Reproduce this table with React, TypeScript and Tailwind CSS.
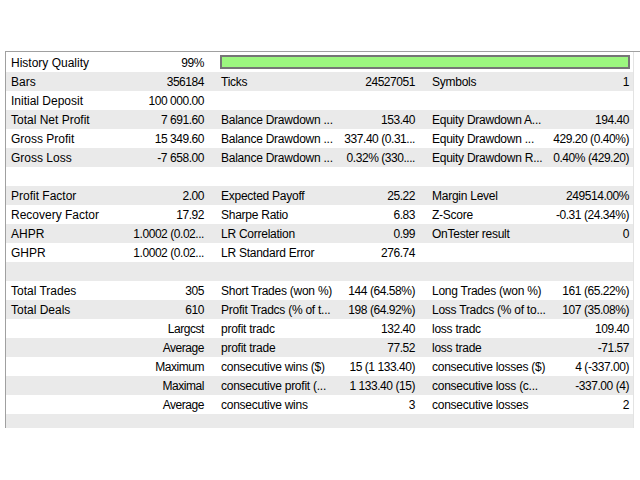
type Row = [string, string, string?, string?, string?, string?];

const rows: Row[] = [
  ["History Quality", "99%"],
  ["Bars", "356184", "Ticks", "24527051", "Symbols", "1"],
  ["Initial Deposit", "100 000.00"],
  ["Total Net Profit", "7 691.60", "Balance Drawdown ...", "153.40", "Equity Drawdown A...", "194.40"],
  ["Gross Profit", "15 349.60", "Balance Drawdown ...", "337.40 (0.31...", "Equity Drawdown ...", "429.20 (0.40%)"],
  ["Gross Loss", "-7 658.00", "Balance Drawdown ...", "0.32% (330....", "Equity Drawdown R...", "0.40% (429.20)"],
  ["", ""],
  ["Profit Factor", "2.00", "Expected Payoff", "25.22", "Margin Level", "249514.00%"],
  ["Recovery Factor", "17.92", "Sharpe Ratio", "6.83", "Z-Score", "-0.31 (24.34%)"],
  ["AHPR", "1.0002 (0.02...", "LR Correlation", "0.99", "OnTester result", "0"],
  ["GHPR", "1.0002 (0.02...", "LR Standard Error", "276.74"],
  ["", ""],
  ["Total Trades", "305", "Short Trades (won %)", "144 (64.58%)", "Long Trades (won %)", "161 (65.22%)"],
  ["Total Deals", "610", "Profit Tradcs (% of t...", "198 (64.92%)", "Loss Tradcs (% of to...", "107 (35.08%)"],
  ["", "Largcst", "profit tradc", "132.40", "loss tradc", "109.40"],
  ["", "Average", "profit trade", "77.52", "loss trade", "-71.57"],
  ["", "Maximum", "consecutive wins ($)", "15 (1 133.40)", "consecutive losses ($)", "4 (-337.00)"],
  ["", "Maximal", "consecutive profit (...", "1 133.40 (15)", "consecutive loss (c...", "-337.00 (4)"],
  ["", "Average", "consecutive wins", "3", "consecutive losses", "2"],
  ["", ""],
];

// labels in the 2nd/3rd blocks and all numbers run a bit narrower than Arial
const cell = "overflow-hidden whitespace-nowrap pt-[1px]";
const label = `${cell} pl-[4px] tracking-[-0.25px]`;
const value = `${cell} text-right tracking-[-0.45px]`;

export default function App() {
  return (
    <div
      className="h-[480px] w-[640px] bg-white pt-[51px] pl-[5px] text-[12px] leading-[18px] text-black"
      style={{ fontFamily: '"Liberation Sans", Arial, sans-serif' }}
    >
      <div className="flex h-[377px] w-[635px] border-t border-l border-[#a0a0a0]">
        <div className="h-full w-[627px] overflow-hidden pt-[1px]">
          {rows.map((r, i) => (
            <div
              key={i}
              className={`grid h-[19px] grid-cols-[119px_92px_122px_89px_121px_84px] ${
                i % 2 === 1 ? "bg-[#eaeaea]" : "bg-white"
              }`}
            >
              <div className={`${cell} pl-[5px]`}>{r[0]}</div>
              <div className={`${value} pr-[13px]`}>{r[1]}</div>
              {i === 0 ? (
                <div className="col-span-4 pt-[2px] pr-[2px] pl-[3px]">
                  <div className="h-[14px] w-[410px] border-2 border-[#767676] bg-[#9cf77f]" />
                </div>
              ) : (
                <>
                  <div className={label}>{r[2]}</div>
                  <div className={`${value} pr-[13px]`}>{r[3]}</div>
                  <div className={label}>{r[4]}</div>
                  <div className={`${value} pr-[4px]`}>{r[5]}</div>
                </>
              )}
            </div>
          ))}
        </div>
        <div className="h-full w-[1px] bg-[#e3e3e3]" />
      </div>
    </div>
  );
}
